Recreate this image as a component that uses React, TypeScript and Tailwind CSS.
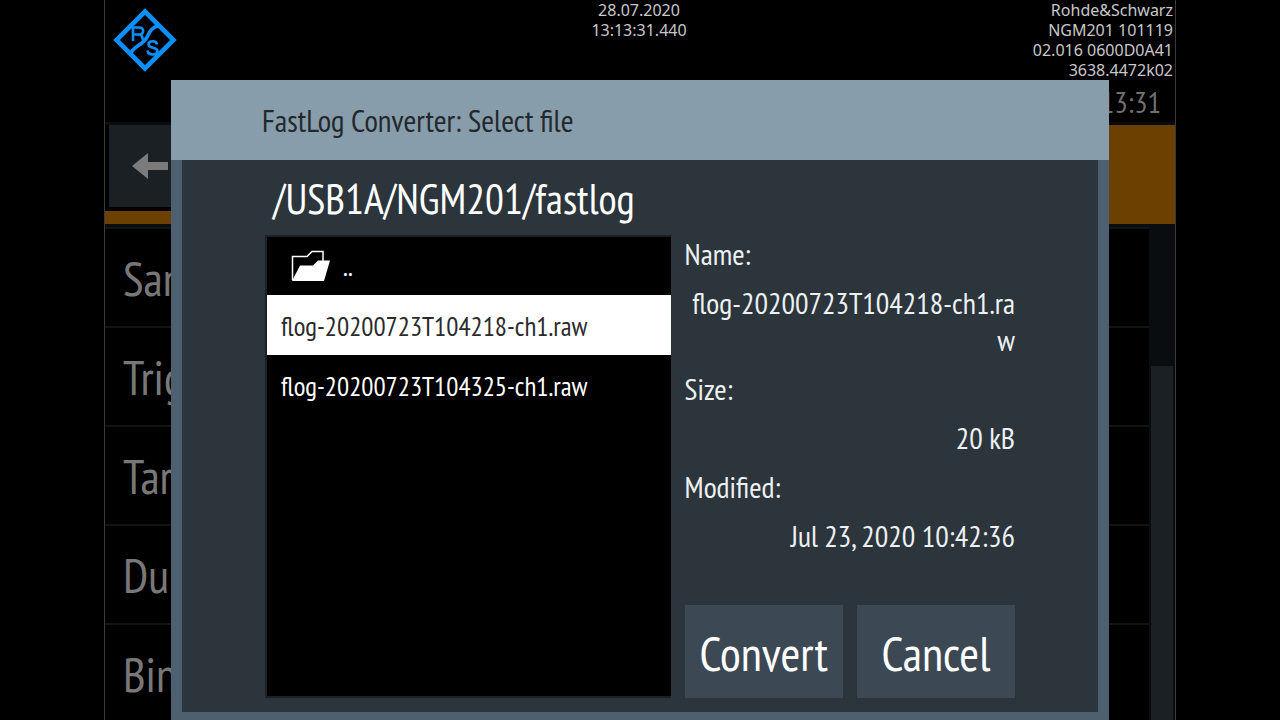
import React from "react";

const settings: string[] = ["Sam", "Trig", "Tar", "Dur", "Bin"];

const files: string[] = [
  "flog-20200723T104218-ch1.raw",
  "flog-20200723T104325-ch1.raw",
];

const details: { label: string; value: string }[] = [
  { label: "Name:", value: "flog-20200723T104218-ch1.raw" },
  { label: "Size:", value: "20 kB" },
  { label: "Modified:", value: "Jul 23, 2020 10:42:36" },
];

function Logo() {
  return (
    <svg viewBox="0 0 64 64" className="h-16 w-16" fill="none" stroke="#0a8ffb" aria-label="R&S">
      <path d="M32 3.5 60.5 32 32 60.5 3.5 32Z" strokeWidth="4.6" />
      <path d="M46 17.5C37 20 36.5 25 33.5 30C29.5 37 20 38.5 17.5 46" strokeWidth="3.6" />
      <path d="M20 33V19.500H26C31.500 19.500 31.500 26.500 26 26.500H20M26 26.500C30.500 26.500 28.500 30 30.500 33" strokeWidth="2.6" />
      <path d="M44 36.500C43.500 32 35.500 32.500 35.500 36.500C35.500 41 44.500 38.500 44.500 43C44.500 47.800 35 47.500 34.500 42.500" strokeWidth="2.6" />
    </svg>
  );
}

function ArrowLeft() {
  return (
    <svg viewBox="0 0 36 26" className="h-[26px] w-9" aria-hidden="true">
      <path d="M0 13 16 0V9H36V17H16V26Z" fill="#7b7b7b" />
    </svg>
  );
}

function FolderOpen() {
  return (
    <svg viewBox="0 0 40 32" className="h-8 w-10" aria-hidden="true">
      <path d="M1.500 30V6.500H16L21 1.500H32V11" fill="none" stroke="#fff" strokeWidth="1.500" />
      <path d="M1 31 9 15.500H22L27 10.500H39L33 31Z" fill="#fff" />
    </svg>
  );
}

function Header() {
  return (
    <header className="grid h-20 shrink-0 grid-cols-[1fr_auto_1fr] pr-0.5 font-['Noto_Sans',sans-serif] text-base leading-5 text-[#c8c8c8]">
      <div className="pt-2 pl-2">
        <Logo />
      </div>
      <div className="text-center">
        <p>28.07.2020</p>
        <p>13:13:31.440</p>
      </div>
      <div className="text-right">
        <p>Rohde&amp;Schwarz</p>
        <p>NGM201 101119</p>
        <p>02.016 0600D0A41</p>
        <p>3638.4472k02</p>
      </div>
    </header>
  );
}

function SettingsScreen() {
  return (
    <div className="flex min-h-0 flex-1 flex-col">
      <div className="flex h-[42px] shrink-0 items-center justify-end pr-3.5 text-[30px] text-[#707070]">
        13:31
      </div>
      <div className="flex h-[105px] shrink-0 border-y-[3px] border-[#090d10]">
        <div className="flex w-32 flex-col">
          <button
            type="button"
            aria-label="Back"
            className="ml-1 flex h-[82px] items-center bg-[#1a2023] pl-[23px]"
          >
            <ArrowLeft />
          </button>
          <div className="mt-1 flex-1 bg-[#6c4000]" />
        </div>
        <div className="flex-1 bg-[#6c4000]" />
      </div>
      <div className="flex min-h-0 flex-1">
        <ul className="flex-1 overflow-hidden text-[48px] text-[#787878]">
          {settings.map((name) => (
            <li key={name} className="flex h-[99px] items-center border-t-2 border-[#111415] pl-[18px]">
              {name}
            </li>
          ))}
        </ul>
        <div className="w-[26px] bg-[#090d10] px-0.5 pt-[139px]">
          <div className="h-full bg-[#1a2023]" />
        </div>
      </div>
    </div>
  );
}

function SelectFileDialog() {
  return (
    <section
      role="dialog"
      aria-labelledby="dialog-title"
      className="absolute inset-x-[66px] top-20 bottom-0 flex flex-col"
    >
      <h1
        id="dialog-title"
        className="flex h-20 shrink-0 items-center bg-[#889dab] pt-0.5 pl-[91px] text-[31px] text-[#22282c]"
      >
        FastLog Converter: Select file
      </h1>
      <div className="flex min-h-0 flex-1 flex-col border-x-[11px] border-b-8 border-[#4d6070] bg-[#2b353b] px-[83px] pb-3.5 text-white">
        <h2 className="flex h-[75px] shrink-0 items-center pt-0.5 pl-2 text-[42px]">
          /USB1A/NGM201/fastlog
        </h2>
        <div className="grid min-h-0 flex-1 grid-cols-[27fr_22fr] gap-x-3.5 text-[27px]">
          <div className="flex flex-col border-2 border-r-0 border-[#1b2226] bg-black">
            <button type="button" className="flex h-[58px] items-center gap-3 pl-6">
              <FolderOpen />
              <span>..</span>
            </button>
            {files.map((file, index) => (
              <button
                key={file}
                type="button"
                className={
                  index === 0
                    ? "h-[60px] bg-white pt-0.5 pl-3.5 text-left text-[#2b2b2b]"
                    : "h-[60px] pt-0.5 pl-3.5 text-left"
                }
              >
                {file}
              </button>
            ))}
          </div>
          <div className="flex flex-col justify-between">
            <dl className="flex flex-col gap-3 text-[30px] leading-[37px] text-[#eef1f3]">
              {details.map((item) => (
                <div key={item.label} className="flex flex-col gap-3">
                  <dt>{item.label}</dt>
                  <dd className="text-right break-all">{item.value}</dd>
                </div>
              ))}
            </dl>
            <div className="grid h-[93px] grid-cols-2 gap-3.5 text-[48px]">
              <button type="button" className="bg-[#3c4853] pt-0.5">
                Convert
              </button>
              <button type="button" className="bg-[#3c4853] pt-0.5">
                Cancel
              </button>
            </div>
          </div>
        </div>
      </div>
    </section>
  );
}

export default function App() {
  return (
    <div className="h-screen bg-black px-[104px] font-['PT_Sans_Narrow','Roboto_Condensed','DejaVu_Sans_Condensed',sans-serif]">
      <main className="relative flex h-full flex-col overflow-hidden border-x border-[#3a3a3a] bg-black">
        <Header />
        <SettingsScreen />
        <SelectFileDialog />
      </main>
    </div>
  );
}
